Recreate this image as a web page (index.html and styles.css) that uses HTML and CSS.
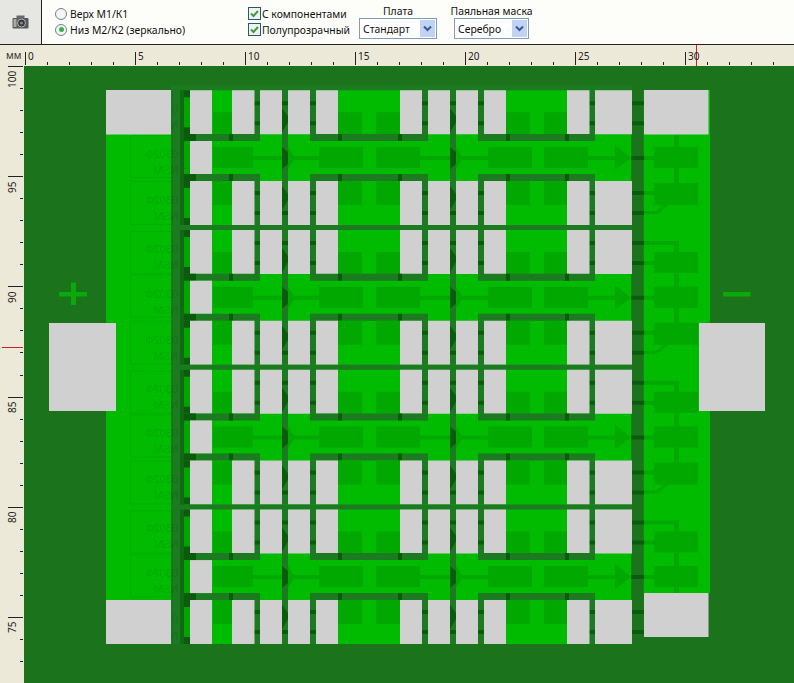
FILE: index.html
```html
<!DOCTYPE html>
<html lang="ru">
<head>
<meta charset="utf-8">
<title>Плата</title>
<link rel="stylesheet" href="styles.css">
</head>
<body>
<div class="toolbar">
  <div class="camera-cell">
    <svg class="camera" viewBox="0 0 17 14" width="17" height="14"><rect x="0.5" y="3" width="16" height="10.5" rx="1" fill="#55585c"/><rect x="4.5" y="0.5" width="8" height="3" fill="#666a6e"/><rect x="1.5" y="4" width="3" height="8" fill="#a9a9a2"/><circle cx="9.5" cy="8" r="4" fill="#34363a" stroke="#b9b9b4"/><circle cx="9.5" cy="8" r="1.6" fill="#85888c"/></svg>
  </div>
  <div class="radios">
    <label class="opt"><span class="radio"></span>Верх М1/К1</label>
    <label class="opt"><span class="radio on"></span>Низ М2/К2 (зеркально)</label>
  </div>
  <div class="checks">
    <label class="opt"><span class="check"><svg viewBox="0 0 11 11" width="11" height="11"><path d="M2 5.500 L4.500 8 L9 3" fill="none" stroke="#3f9a4a" stroke-width="2"/></svg></span>С компонентами</label>
    <label class="opt"><span class="check"><svg viewBox="0 0 11 11" width="11" height="11"><path d="M2 5.500 L4.500 8 L9 3" fill="none" stroke="#3f9a4a" stroke-width="2"/></svg></span>Полупрозрачный</label>
  </div>
  <div class="field board-field">
    <div class="field-label">Плата</div>
    <div class="select"><span class="value">Стандарт</span><span class="arrow"><svg viewBox="0 0 9 7" width="9" height="7"><path d="M1 1.500 L4.500 5 L8 1.500" fill="none" stroke="#3c5a96" stroke-width="2"/></svg></span></div>
  </div>
  <div class="field mask-field">
    <div class="field-label">Паяльная маска</div>
    <div class="select"><span class="value">Серебро</span><span class="arrow"><svg viewBox="0 0 9 7" width="9" height="7"><path d="M1 1.500 L4.500 5 L8 1.500" fill="none" stroke="#3c5a96" stroke-width="2"/></svg></span></div>
  </div>
</div>

<div class="workspace">
  <div class="corner">мм</div>
  <svg class="ruler-top" viewBox="24 45 770 21" width="770" height="21">
    <path class="tick" d="M25.500 52V65M135.500 52V65M245.500 52V65M355.500 52V65M465.500 52V65M575.500 52V65M685.500 52V65"/>
    <path class="tick" d="M47.500 62V65M69.500 62V65M91.500 62V65M113.500 62V65M157.500 62V65M179.500 62V65M201.500 62V65M223.500 62V65M267.500 62V65M289.500 62V65M311.500 62V65M333.500 62V65M377.500 62V65M399.500 62V65M421.500 62V65M443.500 62V65M487.500 62V65M509.500 62V65M531.500 62V65M553.500 62V65M597.500 62V65M619.500 62V65M641.500 62V65M663.500 62V65M707.500 62V65M729.500 62V65M751.500 62V65M773.500 62V65"/>
    <path class="marker" d="M696.500 45V66"/>
    <text class="ruler-num" x="28" y="60">0</text>
    <text class="ruler-num" x="138" y="60">5</text>
    <text class="ruler-num" x="248" y="60">10</text>
    <text class="ruler-num" x="358" y="60">15</text>
    <text class="ruler-num" x="468" y="60">20</text>
    <text class="ruler-num" x="578" y="60">25</text>
    <text class="ruler-num" x="688" y="60">30</text>
  </svg>
  <svg class="ruler-left" viewBox="0 66 24 617" width="24" height="617">
    <path class="tick" d="M8 66.500H23M8 176.500H23M8 286.500H23M8 397.500H23M8 507.500H23M8 617.500H23"/>
    <path class="tick" d="M20 88.500H23M20 110.500H23M20 132.500H23M20 154.500H23M20 198.500H23M20 220.500H23M20 242.500H23M20 264.500H23M20 308.500H23M20 330.500H23M20 352.500H23M20 375.500H23M20 419.500H23M20 441.500H23M20 463.500H23M20 485.500H23M20 529.500H23M20 551.500H23M20 573.500H23M20 595.500H23M20 639.500H23M20 661.500H23"/>
    <path class="marker" d="M2 347.500H23"/>
    <text class="ruler-num" transform="translate(16,88) rotate(-90)">100</text>
    <text class="ruler-num" transform="translate(16,193) rotate(-90)">95</text>
    <text class="ruler-num" transform="translate(16,303) rotate(-90)">90</text>
    <text class="ruler-num" transform="translate(16,413) rotate(-90)">85</text>
    <text class="ruler-num" transform="translate(16,523) rotate(-90)">80</text>
    <text class="ruler-num" transform="translate(16,633) rotate(-90)">75</text>
  </svg>

  <svg class="board" viewBox="24 66 770 617" width="770" height="617">
    <defs>
      <g id="row-a">
        <rect class="ghost-box" x="130.500" y="135.500" width="42" height="42"/>
        <text class="ghost" transform="translate(178,158) scale(-1,1)">0302Ф</text>
        <text class="ghost" transform="translate(178,174) scale(-1,1)">NSM</text>
        <path class="block" d="M213 147h40v21h-40zM319 147h44v21h-44zM376 147h44v21h-44zM488 147h44v21h-44zM544 147h44v21h-44zM654 147h44v21h-44z"/>
        <path class="block" d="M253 156h29v4h-29zM288 156h31v4h-31zM420 156h30v4h-30zM456 156h32v4h-32zM588 156h27v4h-27zM644 156h10v4h-10zM674 134h5v13h-5zM674 168h5v15h-5z"/>
        <path class="block" d="M288 147L295 158L288 169zM456 147L463 158L456 169zM615 145L631 158L615 170z"/>
        <path class="trace" d="M184 134h76v7h-76zM310 134h118v7h-118zM478 134h117v7h-117zM184 174h76v7h-76zM310 174h118v7h-118zM478 174h117v7h-117zM282 134h6v47h-6zM450 134h6v47h-6z"/>
        <path class="dark" d="M184 134h12v7h-12zM229 134h4v7h-4zM338 134h4v7h-4zM398 134h4v7h-4zM506 134h4v7h-4zM565 134h4v7h-4zM184 174h12v7h-12zM229 174h4v7h-4zM338 174h4v7h-4zM398 174h4v7h-4zM506 174h4v7h-4zM565 174h4v7h-4z"/>
        <path class="dark" d="M282 147L288 152V164L282 169zM450 147L456 152V164L450 169zM631 156h13v4h-13z"/>
        <rect class="pad" x="190" y="141" width="22" height="33"/>
      </g>
      <g id="row-b">
        <rect class="ghost-box" x="130.500" y="181.500" width="42" height="43"/>
        <text class="ghost" transform="translate(178,204) scale(-1,1)">0302Ф</text>
        <text class="ghost" transform="translate(178,220) scale(-1,1)">NSM</text>
        <path class="block" d="M213 181h19v24h-19zM338 181h24v24h-24zM376 181h24v24h-24zM506 181h24v24h-24zM544 181h23v24h-23zM654 183h44v22h-44zM644 191h10v4h-10zM644 211h12l8-6h4l-10 9h-14z"/>
        <path class="trace" d="M254 181h6v44h-6zM282 181h6v44h-6zM310 181h6v44h-6zM422 181h6v44h-6zM450 181h6v44h-6zM478 181h6v44h-6zM589 181h6v44h-6z"/>
        <path class="dark" d="M184 181h6v7h-6zM184 218h6v7h-6zM254 191h6v4h-6zM254 211h6v4h-6zM310 191h6v4h-6zM310 211h6v4h-6zM422 191h6v4h-6zM422 211h6v4h-6zM478 191h6v4h-6zM478 211h6v4h-6zM589 191h6v4h-6zM589 211h6v4h-6zM631 191h13v4h-13zM631 211h13v4h-13zM450 211h6v4h-6zM282 211h6v4h-6zM282 186L288 194V200L282 210zM450 186L456 194V200L450 210z"/>
        <path class="pad" d="M190 181h22v44h-22zM232 181h22.500v44h-22.500zM260 181h22v44h-22zM288 181h22v44h-22zM316 181h22v44h-22zM400 181h22v44h-22zM428 181h22v44h-22zM456 181h22v44h-22zM484 181h22v44h-22zM567 181h22.500v44h-22.500zM595 181h37v44h-37z"/>
      </g>
      <g id="row-c">
        <rect class="ghost-box" x="130.500" y="231.500" width="42" height="42"/>
        <text class="ghost" transform="translate(178,253) scale(-1,1)">0302Ф</text>
        <text class="ghost" transform="translate(178,269) scale(-1,1)">NSM</text>
        <path class="block" d="M213 252h19v22h-19zM338 252h24v22h-24zM376 252h24v22h-24zM506 252h24v22h-24zM544 252h23v22h-23zM654 252h44v21h-44zM644 241h35v4h-35zM674 245h5v7h-5zM644 261h10v4h-10z"/>
        <path class="trace" d="M171 225h461v5h-461zM254 230h6v44h-6zM282 230h6v44h-6zM310 230h6v44h-6zM422 230h6v44h-6zM450 230h6v44h-6zM478 230h6v44h-6zM589 230h6v44h-6z"/>
        <path class="dark" d="M184 230h6v7h-6zM184 267h6v7h-6zM254 241h6v4h-6zM254 261h6v4h-6zM310 241h6v4h-6zM310 261h6v4h-6zM422 241h6v4h-6zM422 261h6v4h-6zM478 241h6v4h-6zM478 261h6v4h-6zM589 241h6v4h-6zM589 261h6v4h-6zM631 241h13v4h-13zM631 261h13v4h-13zM450 241h6v4h-6zM282 241h6v4h-6zM282 248L288 256V262L282 272zM450 248L456 256V262L450 272z"/>
        <path class="pad" d="M190 230h22v44h-22zM232 230h22.500v44h-22.500zM260 230h22v44h-22zM288 230h22v44h-22zM316 230h22v44h-22zM400 230h22v44h-22zM428 230h22v44h-22zM456 230h22v44h-22zM484 230h22v44h-22zM567 230h22.500v44h-22.500zM595 230h37v44h-37z"/>
      </g>
    </defs>
    <rect class="ground" x="24" y="66" width="770" height="617"/>
    <rect class="bright" x="106" y="90" width="525.500" height="554"/>
    <rect class="bright" x="643.500" y="90" width="66.500" height="503"/>
    <rect class="ground" x="631.500" y="90" width="12" height="554"/>
    <rect class="trace" x="171" y="90" width="9" height="554"/>
    <rect class="dark-band" x="180" y="90" width="4" height="554"/>
    <rect class="inner" x="184" y="90" width="6" height="554"/>

    <use href="#row-c" y="-139.700"/>
    <use href="#row-a"/>
    <use href="#row-b"/>
    <use href="#row-c"/>
    <use href="#row-a" y="139.700"/>
    <use href="#row-b" y="139.700"/>
    <use href="#row-c" y="139.700"/>
    <use href="#row-a" y="279.400"/>
    <use href="#row-b" y="279.400"/>
    <use href="#row-c" y="279.400"/>
    <use href="#row-a" y="419.100"/>
    <use href="#row-b" y="419.100"/>

    <rect class="ground" x="632" y="637" width="162" height="46"/>
    <rect class="ground" x="106" y="644" width="690" height="39"/>
    <path class="pad" d="M106 90h65v44.500h-65zM106 600h65v44h-65zM644 90h64.500v44.500h-64.500zM644 593h64.500v44h-64.500zM49 323h67v88h-67zM699 323h66v88h-66z"/>
    <path class="sign" d="M59 292h12v-9.500h5v9.500h11v4.500h-11v8.500h-5v-8.500h-12zM723 292h27.500v4.500h-27.500z"/>
  </svg>
</div>
</body>
</html>
```

FILE: styles.css
```css
html, body {
  margin: 0;
  padding: 0;
  width: 794px;
  height: 683px;
  overflow: hidden;
  background: #ece9d8;
  font-family: "Noto Sans", "Liberation Sans", sans-serif;
  font-size: 10.400px;
  color: #111;
}

.toolbar {
  display: flex;
  height: 44px;
  background: #fdfdf9;
  border-bottom: 1px solid #222;
}

.camera-cell {
  width: 41px;
  display: flex;
  align-items: center;
  justify-content: center;
  background: #e6e6e2;
  border-right: 1px solid #222;
}

.radios {
  width: 193px;
  margin-left: 13px;
  padding-top: 7px;
  display: flex;
  flex-direction: column;
  gap: 3px;
}

.checks {
  width: 111px;
  padding-top: 7px;
  display: flex;
  flex-direction: column;
  gap: 3px;
}

.opt {
  display: flex;
  align-items: center;
  gap: 3px;
  height: 13px;
  white-space: nowrap;
}

.checks .opt {
  gap: 1px;
}

.radio {
  width: 10px;
  height: 10px;
  border: 1px solid #6e8398;
  border-radius: 50%;
  background: #f4f4f0;
  display: flex;
  align-items: center;
  justify-content: center;
  flex: none;
}

.radio.on::after {
  content: "";
  width: 5px;
  height: 5px;
  border-radius: 50%;
  background: #3fae5a;
}

.check {
  width: 11px;
  height: 11px;
  border: 1px solid #1f5a7a;
  background: #f2f2ea;
  display: block;
  flex: none;
}

.check svg {
  display: block;
}

.field {
  display: flex;
  flex-direction: column;
  align-items: center;
  padding-top: 5px;
}

.board-field {
  width: 78px;
}

.mask-field {
  width: 75px;
  margin-left: 17px;
}

.field-label {
  height: 13px;
  line-height: 13px;
  white-space: nowrap;
}

.select {
  width: 100%;
  height: 21px;
  box-sizing: border-box;
  border: 1px solid #7f9db9;
  background: #fff;
  display: flex;
  align-items: center;
  justify-content: space-between;
  padding: 1px;
}

.value {
  padding-left: 2px;
}

.arrow {
  width: 15px;
  height: 17px;
  background: #c1d3f5;
  display: flex;
  align-items: center;
  justify-content: center;
}

.workspace {
  display: grid;
  grid-template-columns: 24px 770px;
  grid-template-rows: 21px 617px;
}

.corner {
  font-size: 10px;
  padding: 3px 0 0 6px;
  color: #333;
}

.ruler-top,
.ruler-left,
.board {
  display: block;
}

.tick {
  stroke: #222;
  stroke-width: 1;
  fill: none;
}

.marker {
  stroke: #d0202a;
  stroke-width: 1;
  fill: none;
}

.ruler-num {
  font-family: "Noto Sans", "Liberation Sans", sans-serif;
  font-size: 10px;
  fill: #222;
}

.ground { fill: #1b741c; }
.bright { fill: #00bb00; }
.trace { fill: #1c7a20; }
.dark-band { fill: #106a12; }
.inner { fill: #00a500; }
.dark { fill: #0a5c0c; }
.block { fill: #00a800; }
.pad { fill: #d0d0d0; }
.sign { fill: #0aaa0a; }

.ghost-box {
  fill: none;
  stroke: #000;
  stroke-opacity: 0.06;
}

.ghost {
  font-family: "Liberation Sans", sans-serif;
  font-size: 11px;
  fill: #000;
  fill-opacity: 0.11;
}
```
